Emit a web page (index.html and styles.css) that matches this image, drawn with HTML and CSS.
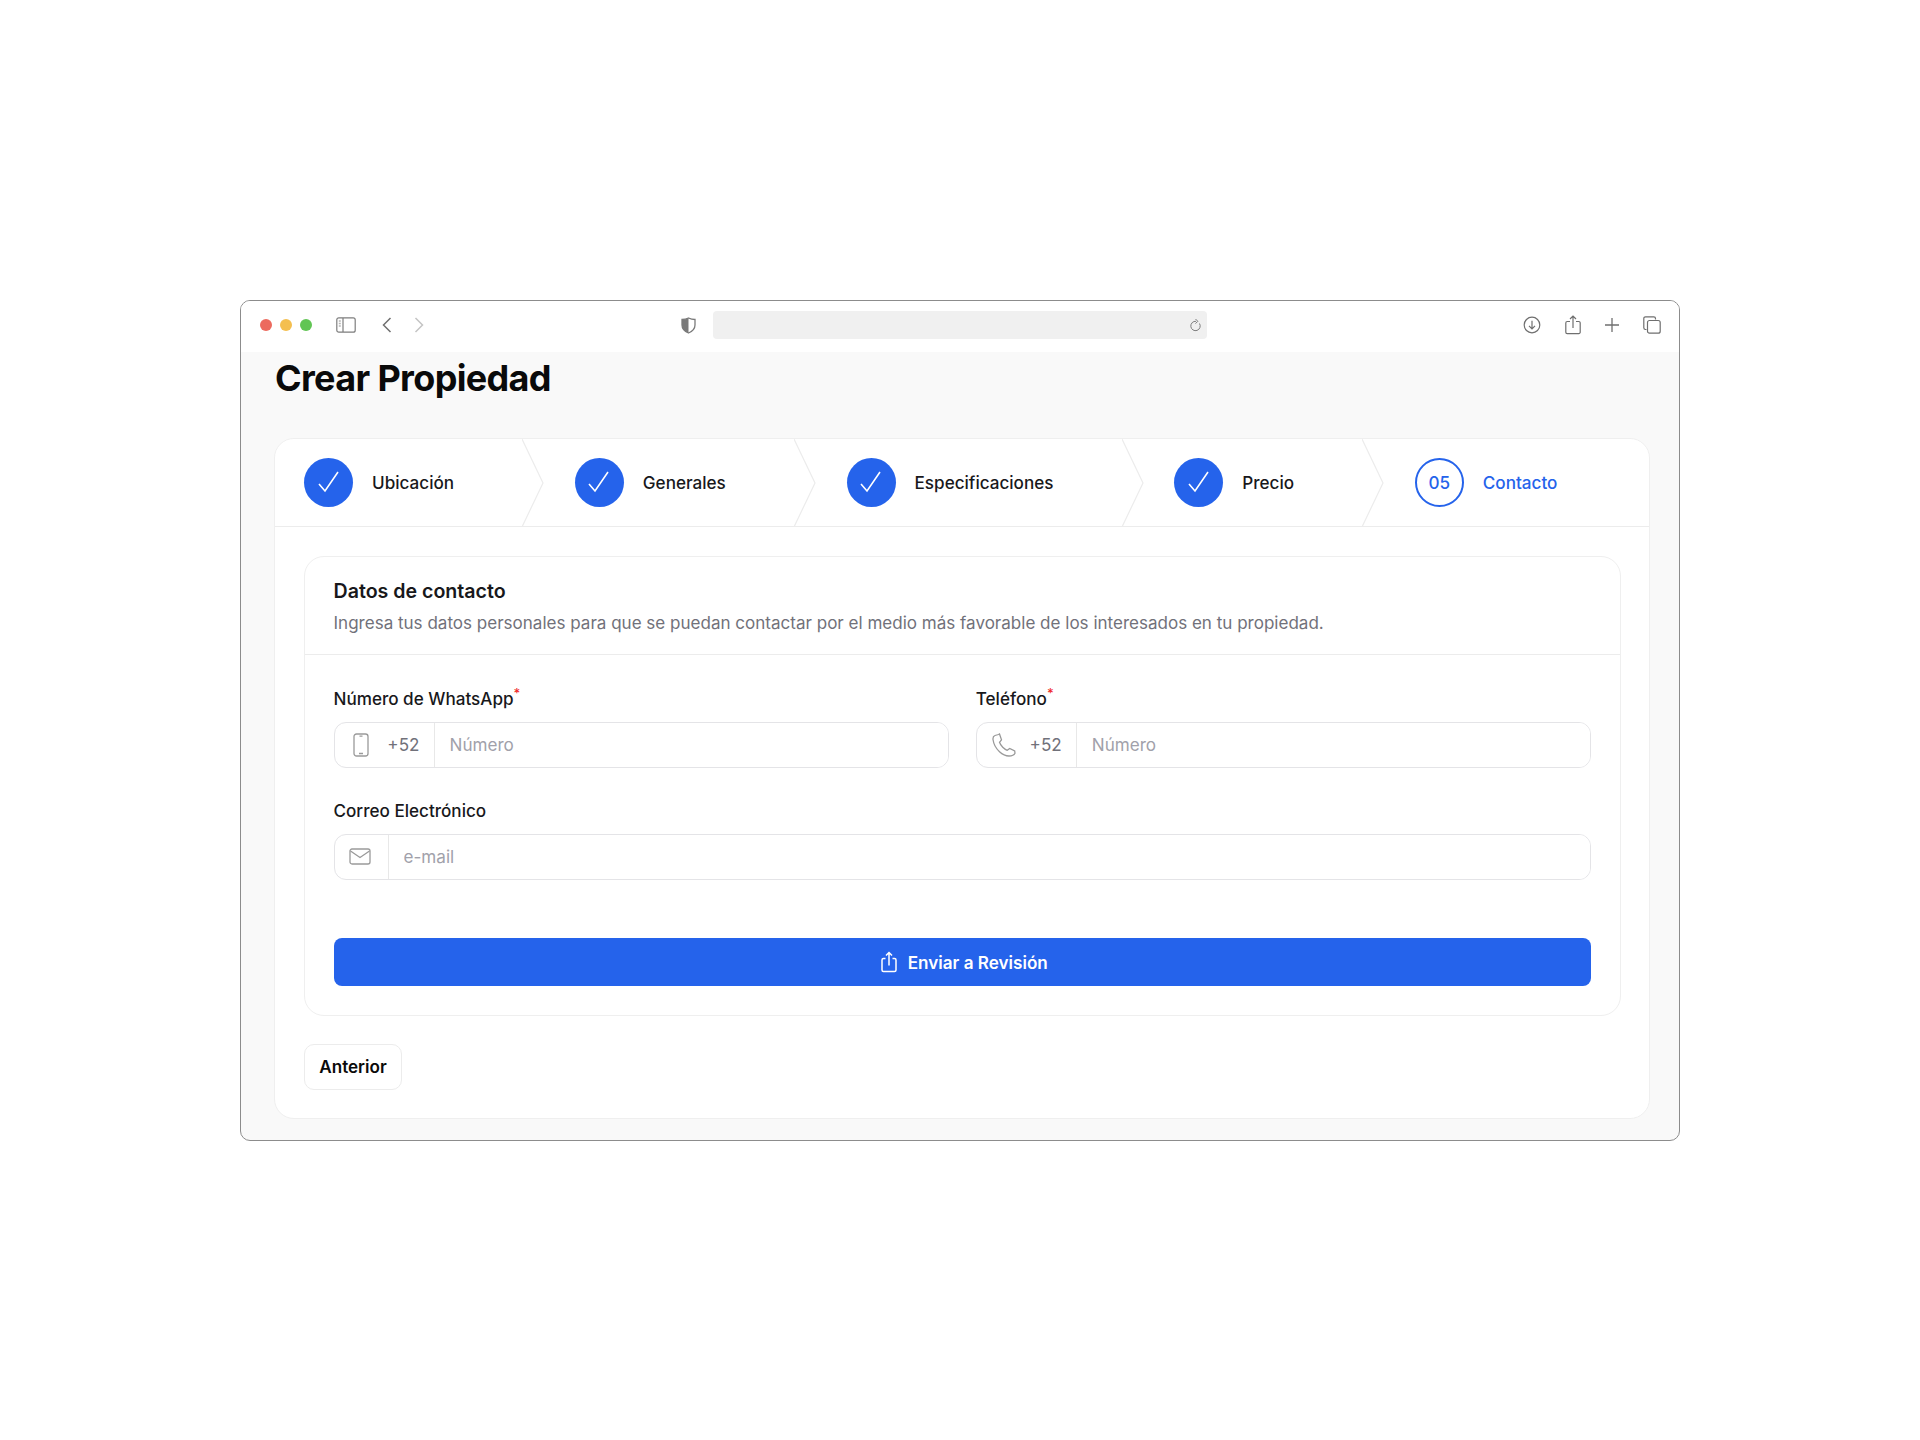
FILE: index.html
```html
<!DOCTYPE html>
<html lang="es">

<head>
    <meta charset="UTF-8">
    <meta name="viewport" content="width=device-width, initial-scale=1.0">
    <title>Crear Propiedad</title>
    <link rel="stylesheet" href="styles.css">
</head>

<body>
    <div class="window">
        <!-- Barra del navegador -->
        <div class="toolbar">
            <div class="lights">
                <span class="light light-red"></span>
                <span class="light light-yellow"></span>
                <span class="light light-green"></span>
            </div>
            <svg class="tool-sidebar" width="20" height="16" viewBox="0 0 20 16" fill="none" stroke="#7d7d7d" stroke-width="1.2">
                <rect x="0.8" y="0.8" width="18.4" height="14.4" rx="2"/>
                <path d="M7 1v14"/>
                <path d="M2.8 4h2M2.8 6.5h2M2.8 9h2" stroke-width="1.4" stroke="#b5b5b5"/>
            </svg>
            <svg class="tool-back" width="10" height="16" viewBox="0 0 10 16" fill="none" stroke="#6f6f6f" stroke-width="1.5">
                <path d="M8.5 1L1.5 8l7 7"/>
            </svg>
            <svg class="tool-forward" width="10" height="16" viewBox="0 0 10 16" fill="none" stroke="#c4c4c4" stroke-width="1.5">
                <path d="M1.5 1l7 7-7 7"/>
            </svg>
            <svg class="tool-shield" width="15" height="17" viewBox="0 0 15 17">
                <path d="M7.5 1C5.5 2 3 2.500 1 2.500v5.500c0 4 3 6.500 6.500 8 3.500-1.500 6.500-4 6.500-8V2.500C12 2.500 9.500 2 7.500 1z" fill="none" stroke="#7a7a7a" stroke-width="1.300"/>
                <path d="M7.500 1C5.500 2 3 2.500 1 2.500v5.500c0 4 3 6.500 6.500 8z" fill="#7a7a7a"/>
            </svg>
            <div class="url-bar">
                <svg width="12" height="14" viewBox="0 0 12 14" fill="none" stroke="#7d7d7d" stroke-width="1">
                    <path d="M9.500 5.500A4.700 4.700 0 1 1 6 3.300"/>
                    <path d="M5.500 1l2.300 2.300-2.300 2.300"/>
                </svg>
            </div>
            <div class="tool-actions">
                <svg width="18" height="18" viewBox="0 0 18 18" fill="none" stroke="#6f6f6f" stroke-width="1.200">
                    <circle cx="9" cy="9" r="7.800"/>
                    <path d="M9 4.800v8M6 9.800l3 3 3-3"/>
                </svg>
                <svg width="16" height="20" viewBox="0 0 16 20" fill="none" stroke="#6f6f6f" stroke-width="1.200">
                    <path d="M5 6.500H2.200a1.400 1.400 0 0 0-1.400 1.400v9.300a1.400 1.400 0 0 0 1.400 1.400h11.600a1.400 1.400 0 0 0 1.400-1.400V7.900a1.400 1.400 0 0 0-1.400-1.400H11"/>
                    <path d="M8 13V1M5 4l3-3 3 3"/>
                </svg>
                <svg width="14" height="14" viewBox="0 0 14 14" fill="none" stroke="#6f6f6f" stroke-width="1.300">
                    <path d="M7 0v14M0 7h14"/>
                </svg>
                <svg width="18" height="18" viewBox="0 0 18 18" fill="none" stroke="#6f6f6f" stroke-width="1.200">
                    <path d="M3.500 13.500H2.500A1.700 1.700 0 0 1 .8 11.800V2.500A1.700 1.700 0 0 1 2.500.8h8.300a1.700 1.700 0 0 1 1.700 1.700v1"/>
                    <rect x="4.500" y="4.500" width="12.700" height="12.700" rx="2"/>
                </svg>
            </div>
        </div>

        <div class="page">
            <h1>Crear Propiedad</h1>

            <div class="wizard">
                <!-- Pasos -->
                <div class="steps">
                    <div class="step">
                        <span class="step-circle"><svg width="22" height="22" viewBox="0 0 22 22" fill="none" stroke="#fff" stroke-width="1.600"><path d="M1 13l6 7L20 1"/></svg></span>
                        <span class="step-label">Ubicación</span>
                        <svg class="step-arrow" width="22" height="88" viewBox="0 0 22 88" fill="none" stroke="#ececec" stroke-width="1.200"><path d="M0 0l21 44L0 88"/></svg>
                    </div>
                    <div class="step">
                        <span class="step-circle"><svg width="22" height="22" viewBox="0 0 22 22" fill="none" stroke="#fff" stroke-width="1.600"><path d="M1 13l6 7L20 1"/></svg></span>
                        <span class="step-label">Generales</span>
                        <svg class="step-arrow" width="22" height="88" viewBox="0 0 22 88" fill="none" stroke="#ececec" stroke-width="1.200"><path d="M0 0l21 44L0 88"/></svg>
                    </div>
                    <div class="step">
                        <span class="step-circle"><svg width="22" height="22" viewBox="0 0 22 22" fill="none" stroke="#fff" stroke-width="1.600"><path d="M1 13l6 7L20 1"/></svg></span>
                        <span class="step-label">Especificaciones</span>
                        <svg class="step-arrow" width="22" height="88" viewBox="0 0 22 88" fill="none" stroke="#ececec" stroke-width="1.200"><path d="M0 0l21 44L0 88"/></svg>
                    </div>
                    <div class="step">
                        <span class="step-circle"><svg width="22" height="22" viewBox="0 0 22 22" fill="none" stroke="#fff" stroke-width="1.600"><path d="M1 13l6 7L20 1"/></svg></span>
                        <span class="step-label">Precio</span>
                        <svg class="step-arrow" width="22" height="88" viewBox="0 0 22 88" fill="none" stroke="#ececec" stroke-width="1.200"><path d="M0 0l21 44L0 88"/></svg>
                    </div>
                    <div class="step step-current">
                        <span class="step-circle">05</span>
                        <span class="step-label">Contacto</span>
                    </div>
                </div>

                <div class="wizard-body">
                    <!-- Datos de contacto -->
                    <div class="card">
                        <div class="card-head">
                            <h2>Datos de contacto</h2>
                            <p>Ingresa tus datos personales para que se puedan contactar por el medio más favorable de los interesados en tu propiedad.</p>
                        </div>
                        <div class="card-body">
                            <div class="form-grid">
                                <div class="field">
                                    <label>Número de WhatsApp<sup class="req">*</sup></label>
                                    <div class="input-group">
                                        <span class="addon addon-prefix">
                                            <svg class="icon-mobile" width="16" height="24" viewBox="0 0 16 24" fill="none" stroke="#9a9a9a" stroke-width="1.300"><rect x="1" y="1" width="14" height="22" rx="2.500"/><path d="M6 20.500h4M6.500 3.200h3"/></svg>
                                            <span>+52</span>
                                        </span>
                                        <input type="text" placeholder="Número">
                                    </div>
                                </div>
                                <div class="field">
                                    <label>Teléfono<sup class="req">*</sup></label>
                                    <div class="input-group">
                                        <span class="addon addon-prefix">
                                            <svg width="24" height="24" viewBox="0 0 24 24" fill="none" stroke="#9a9a9a" stroke-width="1.300"><path d="M6.500 1.500L3 2.500C1.500 3 .8 4.500 1 6.500c.7 5 3 9 6.500 12.200 3 2.800 6.500 4.300 9.500 4.300 2.500 0 5-.8 6-2.800l-.3-2.200-5-2.500-2.500 1.800c-2.800-.8-6.500-4.500-7.700-8l2-2.500-2-5.800z"/></svg>
                                            <span>+52</span>
                                        </span>
                                        <input type="text" placeholder="Número">
                                    </div>
                                </div>
                                <div class="field field-wide">
                                    <label>Correo Electrónico</label>
                                    <div class="input-group">
                                        <span class="addon addon-mail">
                                            <svg width="22" height="17" viewBox="0 0 22 17" fill="none" stroke="#9a9a9a" stroke-width="1.300"><rect x="1" y="1" width="20" height="15" rx="2"/><path d="M1.500 3l9.500 6.500L20.500 3"/></svg>
                                        </span>
                                        <input type="text" placeholder="e-mail">
                                    </div>
                                </div>
                            </div>
                            <button class="button-send">
                                <svg width="18" height="22" viewBox="0 0 18 22" fill="none" stroke="#fff" stroke-width="1.500"><path d="M5.500 7.500H3.500A1.500 1.500 0 0 0 2 9v10a1.500 1.500 0 0 0 1.500 1.500h11A1.500 1.500 0 0 0 16 19V9a1.500 1.500 0 0 0-1.500-1.500h-2"/><path d="M9 14.500V1.500M6 4.500l3-3 3 3"/></svg>
                                Enviar a Revisión
                            </button>
                        </div>
                    </div>

                    <button class="button-prev">Anterior</button>
                </div>
            </div>
        </div>
    </div>
</body>

</html>
```

FILE: styles.css
```css
/* Estilos generales */
* {
    box-sizing: border-box;
}

body {
    font-family: Inter, "Liberation Sans", sans-serif;
    background-color: #fff;
    color: #18181b;
    margin: 0;
    min-height: 1440px;
    display: flex;
    align-items: center;
    justify-content: center;
}

/* Ventana del navegador */
.window {
    width: 1440px;
    height: 841px;
    background-color: #f9f9f9;
    border: 1px solid #8c8c8c;
    border-radius: 10px;
    overflow: hidden;
}

.toolbar {
    height: 51px;
    padding: 0 0 2px 19px;
    background-color: #fff;
    display: flex;
    align-items: center;
}

.lights {
    display: flex;
    gap: 8px;
}

.light {
    width: 12px;
    height: 12px;
    border-radius: 50%;
}

.light-red {
    background-color: #ec6a5e;
}

.light-yellow {
    background-color: #f4bf4f;
}

.light-green {
    background-color: #61c554;
}

.tool-sidebar {
    margin-left: 24px;
}

.tool-back {
    margin-left: 26px;
}

.tool-forward {
    margin-left: 22px;
}

.tool-shield {
    margin-left: 257px;
}

.url-bar {
    width: 494px;
    height: 28px;
    margin-left: 17px;
    padding-right: 5px;
    background-color: #f0f0f0;
    border-radius: 4px;
    display: flex;
    align-items: center;
    justify-content: flex-end;
}

.tool-actions {
    width: 138px;
    margin-left: 316px;
    display: flex;
    align-items: center;
    justify-content: space-between;
}

/* Contenido */
.page {
    padding: 0 29px 0 33px;
}

h1 {
    margin: 0;
    height: 86px;
    padding-left: 1px;
    font-size: 36px;
    line-height: 52px;
    font-weight: 700;
    letter-spacing: -0.65px;
    color: #0a0a0a;
}

.wizard {
    background-color: #fff;
    border: 1px solid #efefef;
    border-radius: 20px;
    height: 681px;
}

/* Pasos */
.steps {
    height: 88px;
    display: flex;
    border-bottom: 1px solid #ececec;
}

.step {
    position: relative;
    display: flex;
    align-items: center;
    gap: 19px;
    padding: 0 68.4px 0 52.4px;
    font-size: 17.1px;
    font-weight: 500;
}

.step:first-child {
    padding-left: 29px;
}

.step-circle {
    width: 49px;
    height: 49px;
    border-radius: 50%;
    background-color: #2563eb;
    display: flex;
    align-items: center;
    justify-content: center;
}

.step-arrow {
    position: absolute;
    left: 100%;
    top: 0;
}

.step-current {
    color: #2563eb;
}

.step-current .step-circle {
    background-color: #fff;
    border: 2px solid #2563eb;
}

.wizard-body {
    padding: 29px 28px 0 29px;
}

/* Tarjeta */
.card {
    border: 1px solid #efefef;
    border-radius: 20px;
    height: 460px;
}

.card-head {
    height: 98px;
    padding: 20px 28px 0 28.5px;
    border-bottom: 1px solid #ececec;
}

.card-head h2 {
    margin: 0;
    font-size: 19.6px;
    line-height: 28px;
    font-weight: 600;
}

.card-head p {
    margin: 4px 0 0;
    font-size: 17.05px;
    line-height: 28px;
    color: #71717a;
}

.card-body {
    padding: 33px 29px 0 28.5px;
}

.form-grid {
    display: grid;
    grid-template-columns: 1fr 1fr;
    gap: 32px 27px;
}

.field-wide {
    grid-column: 1 / 3;
}

.field label {
    display: block;
    height: 22px;
    margin-bottom: 12px;
    font-size: 17.1px;
    line-height: 22px;
    font-weight: 500;
}

.req {
    color: #ef2b2b;
    font-size: 13px;
    line-height: 0;
}

.input-group {
    height: 46px;
    display: flex;
    border: 1.5px solid #e4e4e7;
    border-radius: 12px;
    overflow: hidden;
}

.addon {
    display: flex;
    align-items: center;
    border-right: 1.5px solid #e8e8e8;
    color: #71717a;
    font-size: 17.1px;
}

.addon-prefix {
    width: 100px;
    padding: 0 14px 0 15px;
    justify-content: space-between;
}

.icon-mobile {
    margin-left: 3px;
}

.addon-mail {
    width: 54px;
    padding-right: 2px;
    justify-content: center;
}

.input-group input {
    flex: 1;
    min-width: 0;
    border: none;
    outline: none;
    padding: 0 15px;
    font-family: inherit;
    font-size: 17.1px;
    color: #18181b;
}

.input-group input::placeholder {
    color: #a1a1aa;
}

.button-send {
    width: 100%;
    height: 48px;
    margin-top: 58px;
    padding: 1px 0 0 3px;
    background-color: #2563eb;
    color: #fff;
    border: none;
    border-radius: 8px;
    display: flex;
    align-items: center;
    justify-content: center;
    gap: 10px;
    font-family: inherit;
    font-size: 17.1px;
    font-weight: 600;
}

.button-prev {
    width: 98px;
    height: 46px;
    margin-top: 28px;
    background-color: #fff;
    border: 1.5px solid #ececec;
    border-radius: 10px;
    font-family: inherit;
    font-size: 17.1px;
    font-weight: 600;
    color: #0a0a0a;
}
```
